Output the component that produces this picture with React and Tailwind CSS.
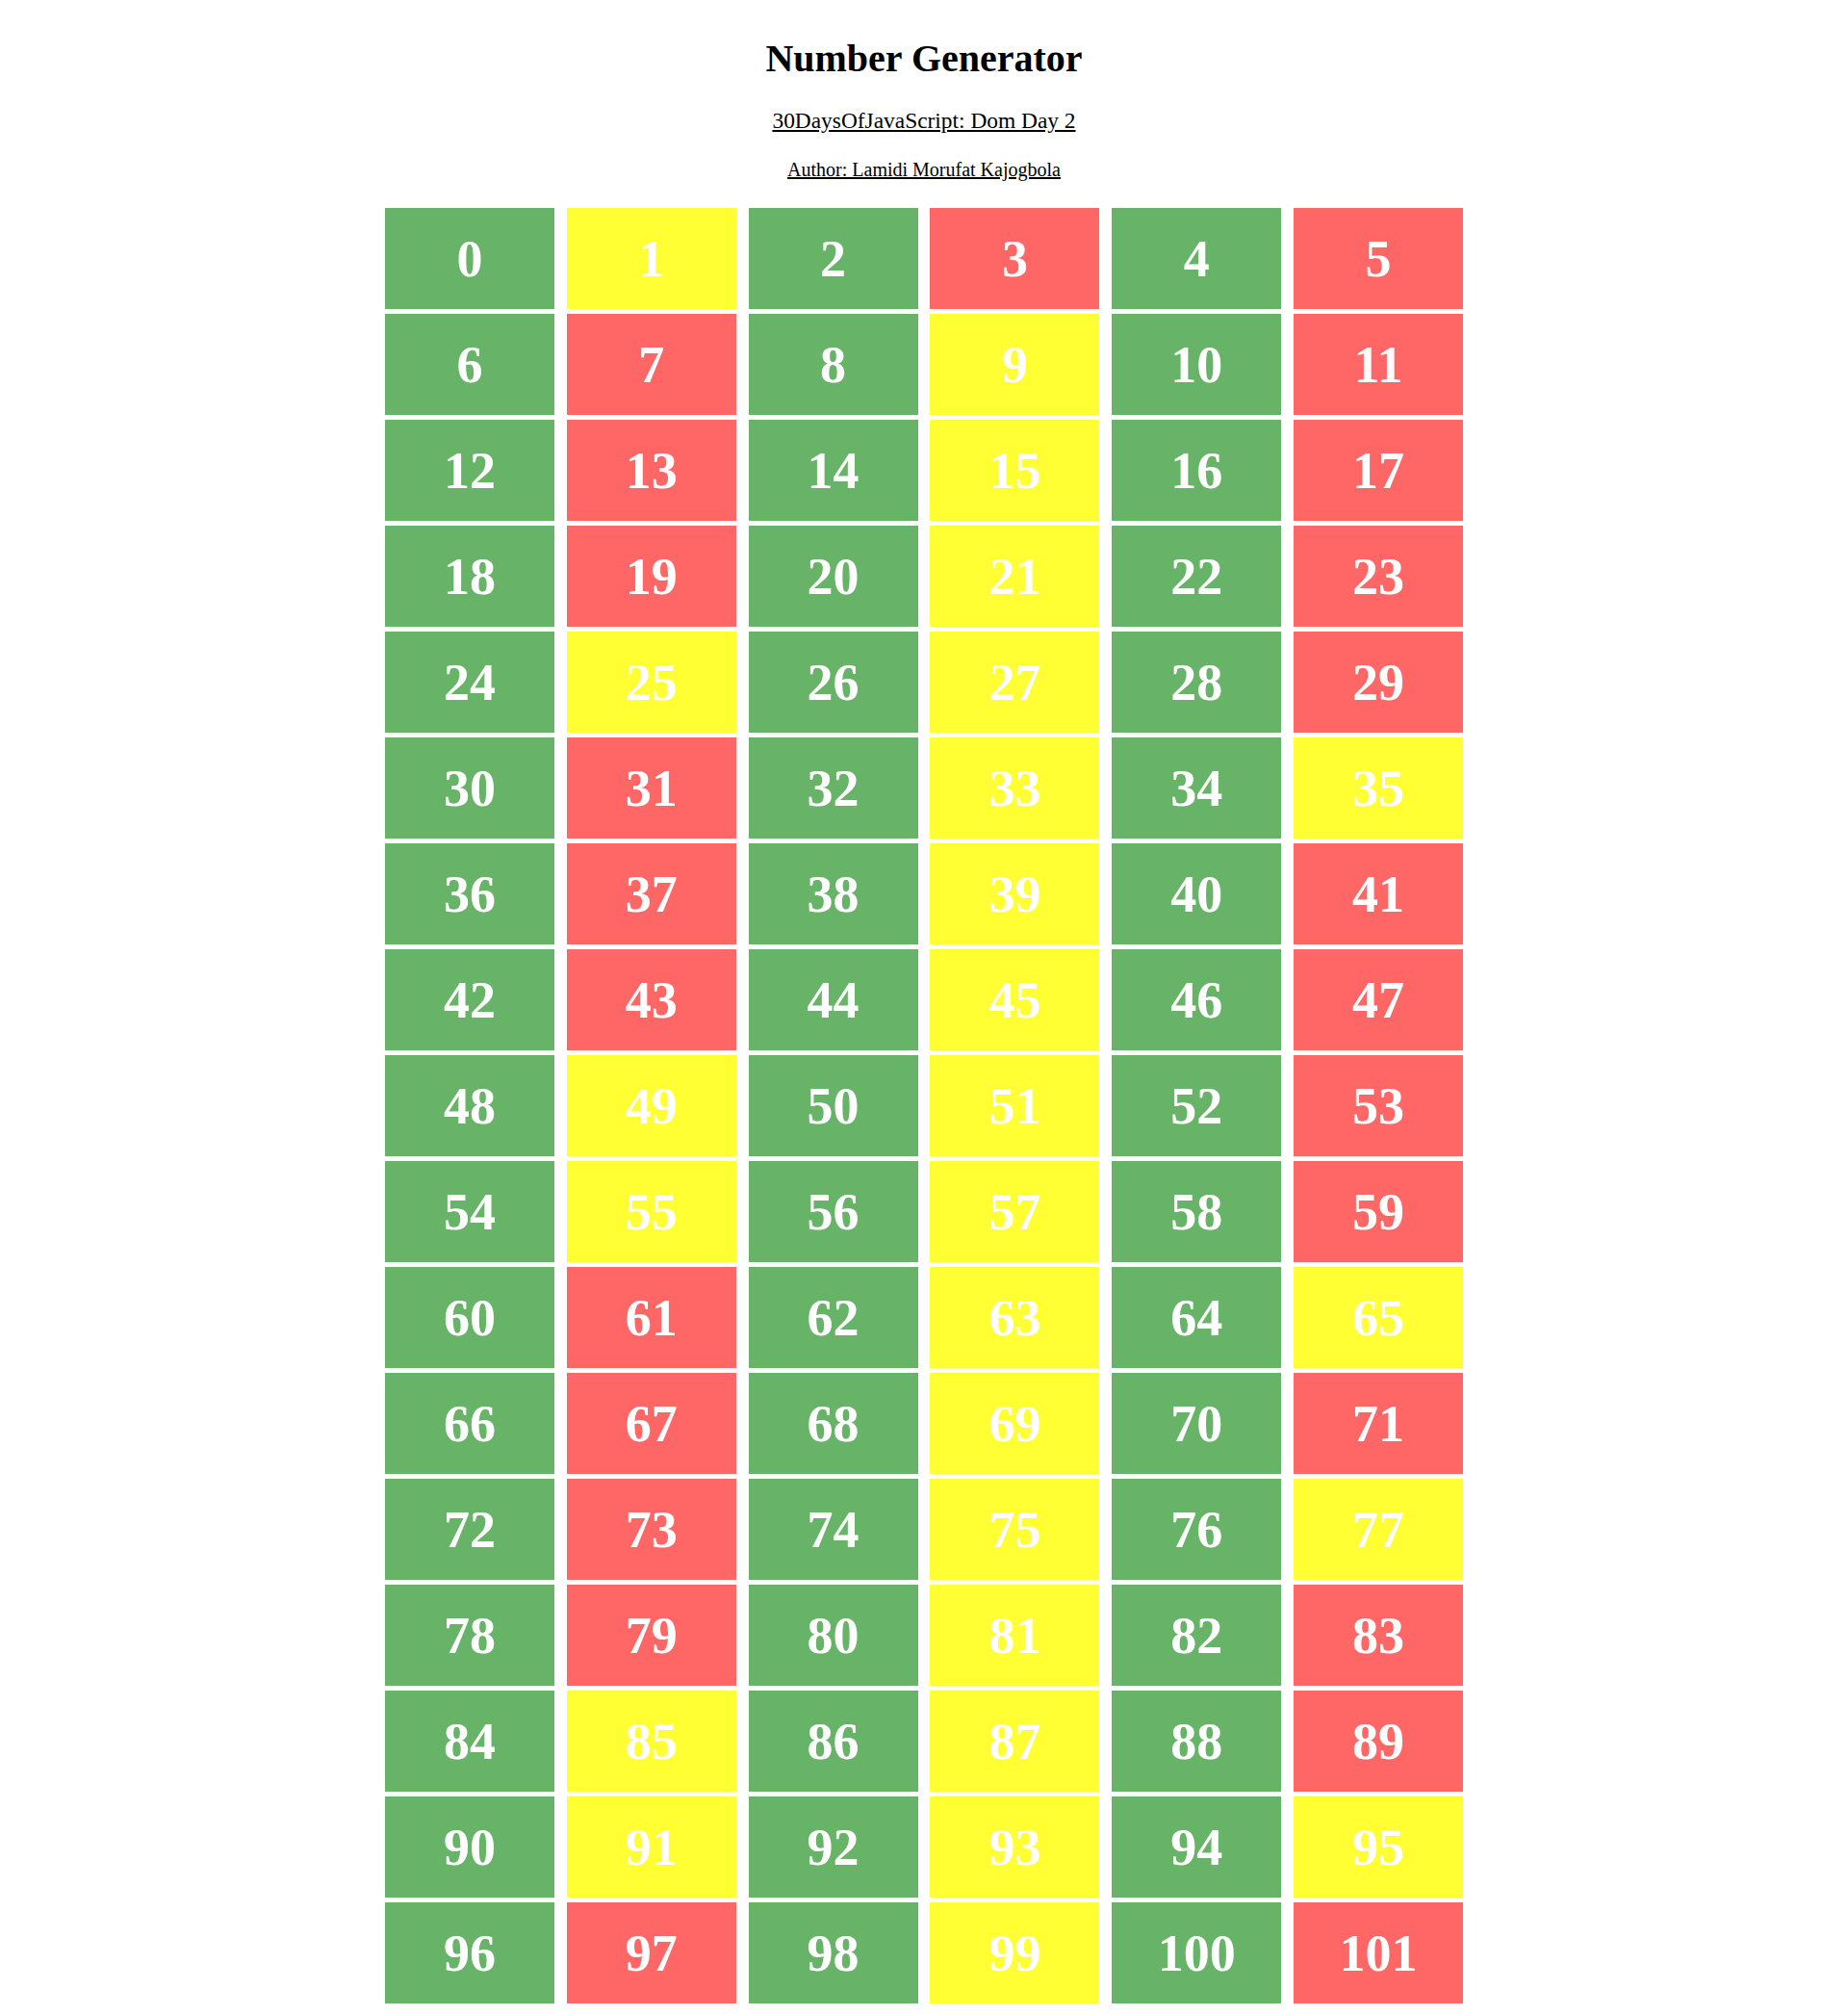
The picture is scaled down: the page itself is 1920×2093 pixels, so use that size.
const numbers = Array.from({ length: 102 }, (_, i) => i)

const isPrime = (n) => {
  if (n < 2) return false
  for (let i = 2; i * i <= n; i++) {
    if (n % i === 0) return false
  }
  return true
}

const cellColor = (n) => {
  if (n % 2 === 0) return 'bg-[#67b367]'
  if (isPrime(n)) return 'bg-[#ff6767]'
  return 'bg-[#ffff33]'
}

export default function App() {
  return (
    <div className="flex flex-col items-center bg-white text-black font-['Liberation_Serif','Times_New_Roman',serif] min-h-[2093px]">
      <h1 className="mt-[37px] text-[40px] leading-[48px] font-bold">
        Number Generator
      </h1>
      <p className="mt-[26px] text-[23.4px] leading-[28px] underline">
        30DaysOfJavaScript: Dom Day 2
      </p>
      <p className="mt-[25px] text-[20px] leading-[24px] underline">
        Author: Lamidi Morufat Kajogbola
      </p>
      <div className="mt-[28px] grid grid-cols-[repeat(6,176px)] gap-x-[12.8px] gap-y-[5px]">
        {numbers.map((n) => (
          <div
            key={n}
            className={
              'h-[105px] pt-[2px] flex items-center justify-center text-white font-bold text-[54px] ' +
              cellColor(n)
            }
          >
            {n}
          </div>
        ))}
      </div>
    </div>
  )
}
